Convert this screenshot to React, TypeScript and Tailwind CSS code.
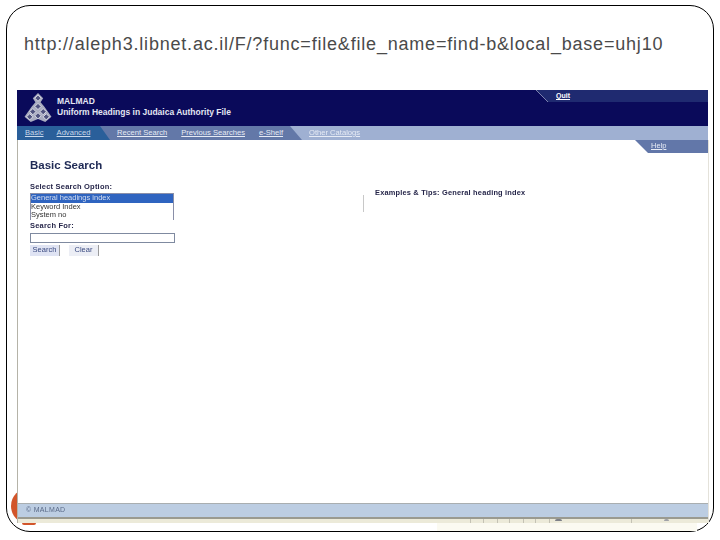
const navLinks = ['Recent Search', 'Previous Searches', 'e-Shelf'];
const ticks = [13, 14, 12, 14, 12, 14];

function Logo() {
  const cells = [
    [13, 5], [13, 13], [8, 18], [18, 18], [13, 22], [5, 23], [21, 23],
  ];
  return (
    <svg width="28" height="29" viewBox="0 0 26 28" className="ml-[7px] mt-[3px] shrink-0">
      <path d="M13 0 L18 5 L15.5 9 L19 13 L26 23 L20 28 L13 25 L6 28 L0 23 L7 13 L10.5 9 L8 5 Z" fill="#a9acc0" />
      {cells.map(([x, y]) => (
        <path
          key={`${x}-${y}`}
          d={`M${x} ${y - 3} L${x + 3} ${y} L${x} ${y + 3} L${x - 3} ${y} Z`}
          fill="#50537f"
          stroke="#e8e8f0"
          strokeWidth="0.8"
        />
      ))}
    </svg>
  );
}

export default function App() {
  return (
    <div className="w-[720px] h-[540px] bg-white pt-[5px] px-[6px] font-['Liberation_Sans',sans-serif] overflow-hidden">
      <div className="relative w-[708px] h-[527px] rounded-[24px] border border-black pl-[10px] pr-[5px] flex flex-col">
        <div className="absolute left-[4px] top-[482px] w-[36px] h-[36px] rounded-full bg-[#d2552a]" />
        <div className="h-[84px] pt-[27px] pl-[7px] text-[18px] leading-[22px] tracking-[0.8px] text-[#4a4a4a] whitespace-nowrap shrink-0 relative">
          http://aleph3.libnet.ac.il/F/?func=file&amp;file_name=find-b&amp;local_base=uhj10
        </div>

        <div className="relative flex-1 flex flex-col min-h-0 blur-[0.3px]">
          <div className="h-[36px] bg-[#0a0a5a] flex shrink-0">
            <Logo />
            <div className="ml-[5px] pt-[6px] text-[8.5px] leading-[11px] font-bold text-[#e4e6f2] whitespace-nowrap">
              <div>MALMAD</div>
              <div>Uniform Headings in Judaica Authority File</div>
            </div>
            <div className="ml-auto w-[172px] h-[12px] bg-[#1f2a70] flex">
              <svg width="12" height="12" viewBox="0 0 12 12" className="bg-[#0a0a5a] shrink-0">
                <path d="M0 0 L12 12 L12 0 Z" fill="#1f2a70" />
                <path d="M0 0 L12 12" stroke="#aab0d0" strokeWidth="0.7" />
              </svg>
              <span className="ml-[8px] text-[7px] leading-[11px] font-bold text-white underline">Quit</span>
            </div>
          </div>

          <div className="h-[14px] flex bg-[#9fb0d2] shrink-0 text-[7.6px] leading-[13px] whitespace-nowrap">
            <div className="w-[83px] bg-[#2a5f9a] pl-[8px] flex gap-[13px] text-[#c9d8ea]">
              <span className="underline">Basic</span>
              <span className="underline">Advanced</span>
            </div>
            <svg width="10" height="14" viewBox="0 0 10 14" className="bg-[#6378a8] shrink-0">
              <path d="M0 0 L0 14 L10 14 Z" fill="#2a5f9a" />
            </svg>
            <div className="w-[180px] bg-[#6378a8] pl-[7px] flex gap-[14px] text-[#e6ebf5]">
              {navLinks.map(l => <span key={l} className="underline">{l}</span>)}
            </div>
            <svg width="12" height="14" viewBox="0 0 12 14" className="shrink-0">
              <path d="M0 0 L12 14 L0 14 Z" fill="#6378a8" />
            </svg>
            <span className="ml-[7px] text-[#e6ebf5] underline">Other Catalogs</span>
          </div>

          <div className="flex-1 min-h-0 mr-[-1px] flex flex-col">
            <div className="flex-1 min-h-0 flex flex-col bg-white border-x border-l-[#b5b3a8] border-r-[#e4e2da]">
              <div className="flex justify-end shrink-0">
                <div className="flex h-[13px] bg-[#6277a9]">
                  <svg width="13" height="13" viewBox="0 0 13 13" className="bg-white shrink-0">
                    <path d="M0 0 L13 0 L13 13 Z" fill="#6277a9" />
                  </svg>
                  <span className="w-[60px] pl-[3px] text-[7.5px] leading-[12px] text-[#e6ebf5] underline">Help</span>
                </div>
              </div>

              <div className="flex-1 flex min-h-0">
                <div className="w-[345px] pl-[12px] shrink-0">
                  <h1 className="mt-[5px] text-[11.5px] leading-[14px] font-bold text-[#1f2a55]">Basic Search</h1>
                  <div className="mt-[10px] text-[7.5px] leading-[10px] font-bold tracking-[0.2px] text-[#26264a]">Select Search Option:</div>
                  <div className="mt-[1px] w-[144px] h-[27px] border-x border-t border-[#8a8fa8] text-[7.5px] leading-[8.5px] text-[#333] overflow-hidden">
                    <div className="bg-[#2f64c0] text-[#d5def0]">General headings index</div>
                    <div>Keyword Index</div>
                    <div>System no</div>
                  </div>
                  <div className="mt-[1px] text-[7.5px] leading-[10px] font-bold tracking-[0.2px] text-[#26264a]">Search For:</div>
                  <div className="mt-[2px] w-[145px] h-[10px] border border-[#7f8aa0] bg-white" />
                  <div className="mt-[2px] flex gap-[9px] text-[7.5px] leading-[10px] text-[#3a4a80]">
                    <div className="w-[30px] h-[11px] bg-[#dfe3f3] border-r border-[#9a9a9a] text-center">Search</div>
                    <div className="w-[30px] h-[11px] bg-[#eceef5] border-r border-[#9a9a9a] text-center">Clear</div>
                  </div>
                </div>
                <div className="mt-[42px] w-px h-[17px] bg-[#c8c8c8] shrink-0" />
                <div className="mt-[35px] ml-[11px] text-[7.4px] leading-[10px] font-bold tracking-[0.2px] text-[#26264a] whitespace-nowrap">
                  Examples &amp; Tips: General heading index
                </div>
              </div>

              <div className="h-[16px] bg-[#bccde2] border-t border-[#a9aeb0] border-b-2 border-b-[#9a9a90] pl-[8px] text-[7px] leading-[12px] text-[#5a6a88] tracking-[0.3px] shrink-0">
                © MALMAD
              </div>
              <div className="h-[4px] shrink-0 bg-[#ecead9] pl-[452px] flex">
                {ticks.map((w, i) => (
                  <div key={i} className="border-l border-[#c4c2b4]" style={{ width: w }} />
                ))}
                <div className="w-[6px] border-l border-[#c4c2b4]" />
                <div className="w-[7px] h-[2px] rounded-t-full bg-[#7d8088]" />
                <div className="ml-[69px] border-l border-[#c4c2b4]" />
                <div className="ml-[32px] w-[5px] h-[2px] rounded-t-full bg-[#a0a2a8]" />
              </div>
            </div>
            <div className="h-[8px] shrink-0 ml-[420px] mr-[12px] bg-[#fbfaf1]" />
          </div>
        </div>
        <div className="absolute left-[15px] top-[517px] w-[14px] h-[2px] rounded-b-full bg-[#d2552a]" />
      </div>
    </div>
  );
}
